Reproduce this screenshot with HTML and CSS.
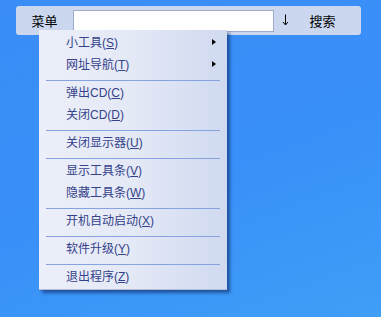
FILE: index.html
```html
<!doctype html>
<html lang="zh-CN">
  <head>
    <meta charset="UTF-8" />
    <title>工具条</title>
    <link rel="stylesheet" href="styles.css">
  </head>
  <body>
    <div class="toolbar">
      <div class="tool-button menu-button">菜单</div>
      <input type="text" class="search-input" />
      <div class="tool-button arrow-button">
        <svg width="7" height="12" viewBox="0 0 7 12">
          <path d="M3.5 0.5 V10.5 M1 8 L3.5 11 L6 8" fill="none" stroke="#000" stroke-width="1" />
        </svg>
      </div>
      <div class="tool-button search-button">搜索</div>
    </div>

    <!-- Dropdown menu -->
    <div class="dropdown">
      <div class="menu-item"><span>小工具(<u>S</u>)</span><i class="sub-arrow"></i></div>
      <div class="menu-item"><span>网址导航(<u>T</u>)</span><i class="sub-arrow"></i></div>
      <div class="separator"></div>
      <div class="menu-item"><span>弹出CD(<u>C</u>)</span></div>
      <div class="menu-item"><span>关闭CD(<u>D</u>)</span></div>
      <div class="separator"></div>
      <div class="menu-item"><span>关闭显示器(<u>U</u>)</span></div>
      <div class="separator"></div>
      <div class="menu-item"><span>显示工具条(<u>V</u>)</span></div>
      <div class="menu-item"><span>隐藏工具条(<u>W</u>)</span></div>
      <div class="separator"></div>
      <div class="menu-item"><span>开机自动启动(<u>X</u>)</span></div>
      <div class="separator"></div>
      <div class="menu-item"><span>软件升级(<u>Y</u>)</span></div>
      <div class="separator"></div>
      <div class="menu-item"><span>退出程序(<u>Z</u>)</span></div>
    </div>
  </body>
</html>
```

FILE: styles.css
```css
body {
  margin: 0;
  height: 317px;
  overflow: hidden;
  position: relative;
  font-family: "Noto Sans CJK SC", "DejaVu Sans", sans-serif;
  background: linear-gradient(160deg, #3a8df6 0%, #3990f8 55%, #3f9ef6 100%);
  padding-top: 6px;
  box-sizing: border-box;
}
.toolbar {
  margin-left: 16px;
  width: 345px;
  height: 29px;
  background-color: #cbd7ee;
  border-radius: 3px;
  display: flex;
  align-items: center;
}
.tool-button {
  font-size: 13px;
  color: #000;
  text-align: center;
  line-height: 29px;
}
.menu-button {
  width: 57px;
}
.search-input {
  width: 201px;
  height: 22px;
  box-sizing: border-box;
  margin: 0;
  padding: 0 3px;
  border: 1px solid #9daccc;
  background-color: #fff;
  outline: none;
}
.arrow-button {
  width: 23px;
  height: 29px;
  display: flex;
  justify-content: center;
  align-items: center;
  padding-bottom: 2px;
  box-sizing: border-box;
}
.search-button {
  width: 51px;
}
/* Dropdown menu */
.dropdown {
  position: absolute;
  left: 39px;
  top: 30px;
  width: 188px;
  padding: 2px 0 1px;
  box-sizing: border-box;
  background: linear-gradient(90deg, #eceff9 0%, #e4e9f6 50%, #cfd9f0 100%);
  border-bottom: 1px solid #b4bdd6;
  box-shadow: 3px 3px 3px rgba(10, 30, 90, 0.55);
}
.menu-item {
  height: 22px;
  line-height: 22px;
  padding: 0 11px 0 27px;
  font-family: "Liberation Sans", "Noto Sans CJK SC", sans-serif;
  font-size: 12px;
  color: #34428a;
  display: flex;
  justify-content: space-between;
  align-items: center;
}
.menu-item u {
  text-underline-offset: 1px;
}
.sub-arrow {
  width: 0;
  height: 0;
  border-left: 4px solid #000;
  border-top: 3px solid transparent;
  border-bottom: 3px solid transparent;
  margin-bottom: 2px;
}
.separator {
  height: 1px;
  margin: 4px 7px 1px;
  background-color: #86a3e0;
}
```
